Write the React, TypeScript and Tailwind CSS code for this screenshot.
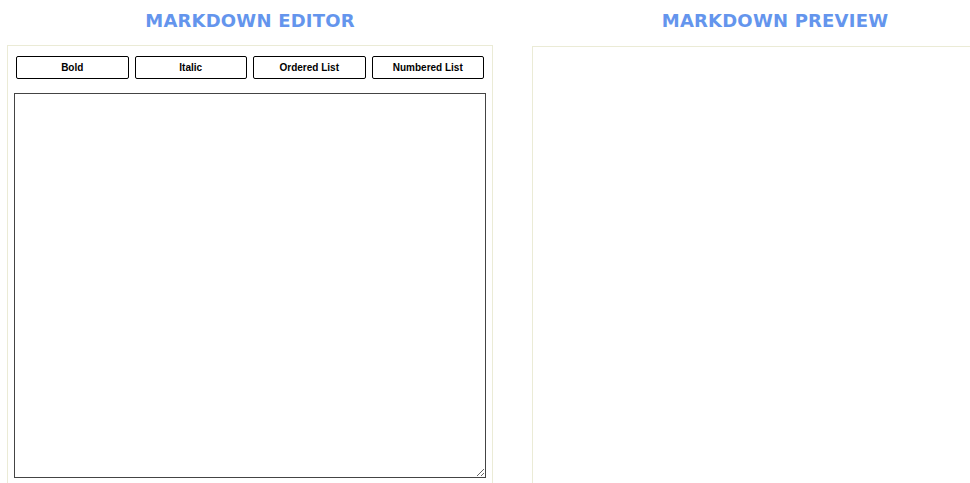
const buttons = ["Bold", "Italic", "Ordered List", "Numbered List"];

export default function App() {
  return (
    <div className="flex gap-[39px] pl-[7px] pt-[9px] bg-white min-h-screen overflow-hidden" style={{ width: 970 }}>
      <section className="w-[486px] shrink-0">
        <h1 className="text-center text-[18px] leading-[24px] font-bold text-[#6495ed] font-['DejaVu_Sans',sans-serif] mb-[12px] tracking-[0.2px]">
          MARKDOWN EDITOR
        </h1>
        <div className="border border-[#ebebd6] px-[6px] pt-[10px] pb-[10px] h-[460px]">
          <div className="flex gap-[6px] px-[2px]">
            {buttons.map((label) => (
              <button
                key={label}
                className="flex-1 h-[23px] border border-black rounded-[2px] bg-white text-[10px] font-bold text-black font-['Liberation_Sans',Arial,sans-serif]"
              >
                {label}
              </button>
            ))}
          </div>
          <textarea className="block mt-[14px] w-full h-[385px] border border-[#444] bg-white resize" />
        </div>
      </section>
      <section className="w-[486px] shrink-0">
        <h1 className="text-center text-[18px] leading-[24px] font-bold text-[#6495ed] font-['DejaVu_Sans',sans-serif] mb-[13px] tracking-[0.2px]">
          MARKDOWN PREVIEW
        </h1>
        <div className="border border-[#ebebd6] h-[460px]" />
      </section>
    </div>
  );
}
